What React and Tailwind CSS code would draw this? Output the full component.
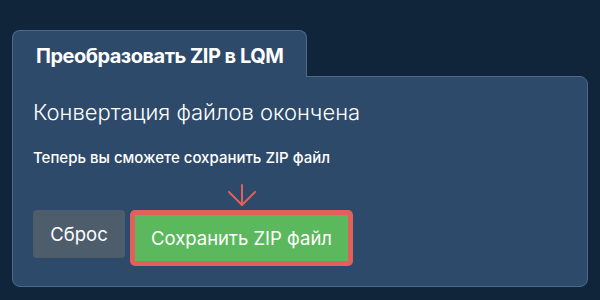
export default function App() {
  return (
    <div className="w-[600px] h-[300px] bg-[#10243a] pt-[30px] px-[12px] font-['Inter',sans-serif] text-white">
      <div className="flex">
        <div className="relative z-10 -mb-px w-[295px] h-[47px] bg-[#2d4a6a] border border-b-0 border-[#4d6a8a] rounded-t-[8px] pl-[23px] pt-[4px] flex items-center">
          <span className="text-[20px] font-bold leading-none tracking-[-0.5px]">Преобразовать ZIP в LQM</span>
        </div>
      </div>
      <div className="relative h-[211px] bg-[#2d4a6a] border border-[#4d6a8a] rounded-b-[8px] rounded-tr-[8px] px-[20px] pt-[22px]">
        <h1 className="text-[22px] font-light leading-[26px]">Конвертация файлов окончена</h1>
        <p className="mt-[23px] text-[15px] font-medium leading-[20px]">Теперь вы сможете сохранить ZIP файл</p>
        <div className="mt-[42px] flex items-start gap-[5px]">
          <button className="w-[92px] h-[48px] rounded-[4px] bg-[#4e5d6c] text-[18.5px] leading-none">Сброс</button>
          <div className="rounded-[5px] bg-[#e0605a] p-[5px]">
            <button className="w-[213px] h-[46px] bg-[#5cb85c] text-[18.5px] leading-none">Сохранить ZIP файл</button>
          </div>
        </div>
        <svg className="absolute left-[214px] top-[107px]" width="30" height="24" viewBox="0 0 30 24" fill="none" stroke="#e0605a" strokeWidth="2" strokeLinecap="round">
          <path d="M15 1 V21" />
          <path d="M2 8 L15 21 L28 8" />
        </svg>
      </div>
    </div>
  );
}
